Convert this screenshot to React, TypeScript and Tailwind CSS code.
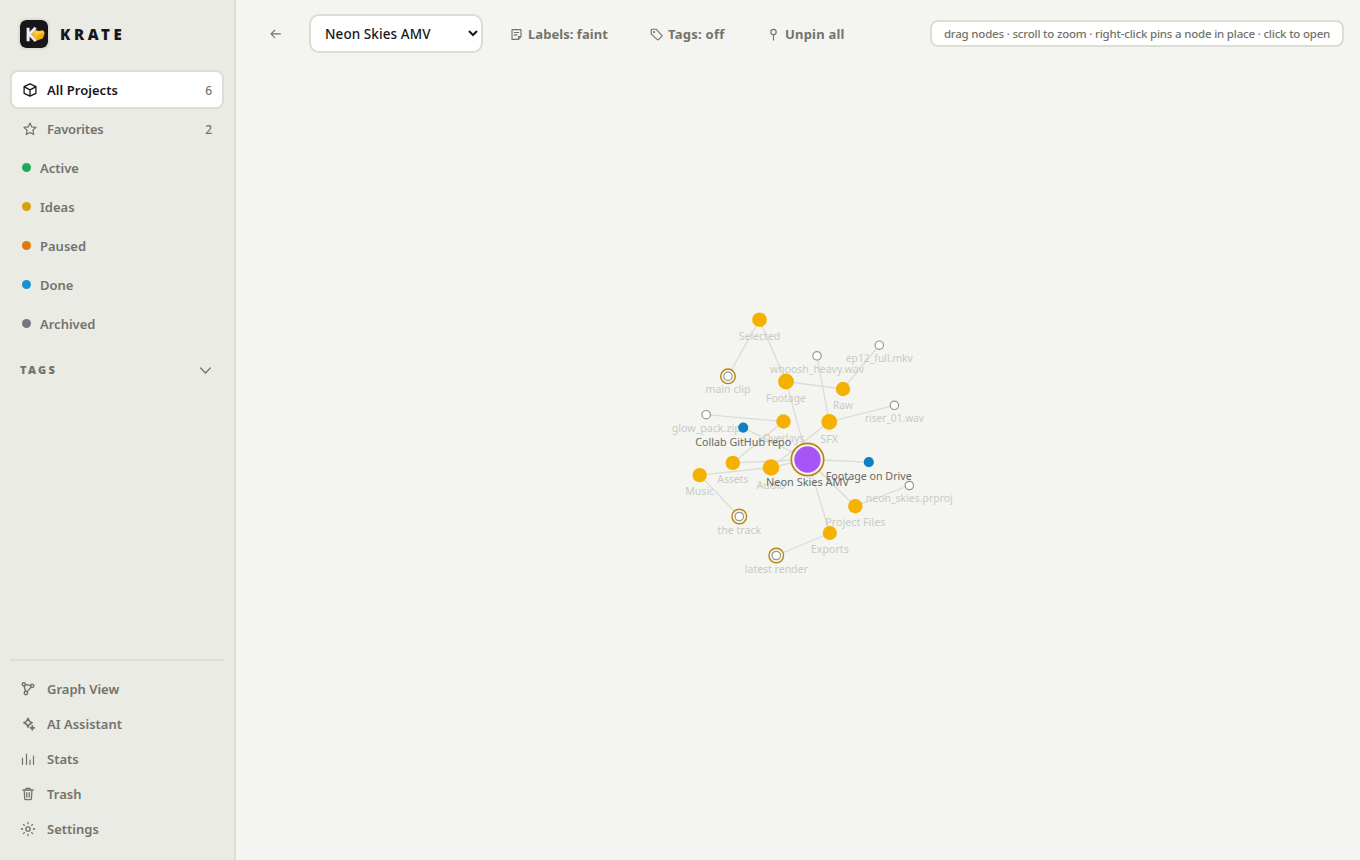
import React from "react";

type IconProps = { children: React.ReactNode; size?: number; sw?: number };

function Icon({ children, size = 16, sw = 1.2 }: IconProps) {
  return (
    <svg width={size} height={size} viewBox="0 0 16 16" fill="none" stroke="currentColor" strokeWidth={sw} strokeLinecap="round" strokeLinejoin="round" className="block shrink-0">
      {children}
    </svg>
  );
}

const statuses = [
  { name: "Active", dot: "bg-[#22a958]" },
  { name: "Ideas", dot: "bg-[#d6a10c]" },
  { name: "Paused", dot: "bg-[#e07a0c]" },
  { name: "Done", dot: "bg-[#1a90cf]" },
  { name: "Archived", dot: "bg-[#777680]" },
];

const tools = [
  {
    name: "Graph View",
    icon: (
      <Icon sw={1.4}>
        <circle cx="3.8" cy="3.3" r="1.6" />
        <circle cx="12.3" cy="4.7" r="1.6" />
        <circle cx="5.9" cy="12" r="1.7" />
        <path d="M5.5 3.7l5.1.7M4.2 5l1.3 5.200M11.200 6l-4 4.600" />
      </Icon>
    ),
  },
  {
    name: "AI Assistant",
    icon: (
      <Icon sw={1.5}>
        <path d="M8 2.2C8.5 5 9.5 6 12.2 6.7 9.5 7.4 8.5 8.5 8 11.2 7.5 8.5 6.5 7.4 3.8 6.7 6.5 6 7.5 5 8 2.2z" />
        <path d="M12.3 9.800v4M10.300 11.800h4" strokeWidth="1.8" />
      </Icon>
    ),
  },
  {
    name: "Stats",
    icon: (
      <Icon>
        <path d="M2.5 7v6.500M6.500 3v10.500M10 9v4.500M13.500 5v8.500" />
      </Icon>
    ),
  },
  {
    name: "Trash",
    icon: (
      <Icon sw={1.3}>
        <path d="M3 4h10.200M6 3.800V2.300h4v1.500M4.200 4.200l.5 8.500q.1 1 1.100 1h4.500q1 0 1.100-1l.5-8.500M6.800 6.700V11M9.300 6.700V11" />
      </Icon>
    ),
  },
  {
    name: "Settings",
    icon: (
      <Icon sw={1.3}>
        <circle cx="8" cy="8" r="2.200" />
        <path d="M8 1.500v1.200M8 13.300v1.200M1.300 8h1.400M13.300 8h1.400M3.400 3.400l1 1M11.600 11.600l1 1M3.400 12.600l1-1M11.600 4.400l1-1" />
      </Icon>
    ),
  },
];

function Logo() {
  return (
    <svg width="28" height="28" viewBox="0 0 28 28" className="block shrink-0 rounded-[6px] bg-[#17171b] outline-2 outline-[#dddfd3]">
      <path d="M8.1 7.800v13.400M15.600 7.800L9.400 14.300l6.400 6.700" fill="none" stroke="#eeeef6" strokeWidth="3" />
      <path d="M11.600 14.300l3.600-4 3.600.6 4.400-.4 1.500 2.700-1.700 5-6.600 2.600z" fill="#f5a90c" />
      <path d="M13.400 12.600l2-2 3.400.5 4.200-.4.900 1.600-6.600 2.600z" fill="#ffd13b" />
      <path d="M11.600 14.300l1.700-1.800 4 2.400-.9 5.700z" fill="#fbbb22" />
    </svg>
  );
}

type Node = { x: number; y: number; r: number; kind: "folder" | "file" | "link" | "root"; pin?: boolean; label: string; ly: number; w: number };

const nodes: Record<string, Node> = {
  selected: { x: 759.5, y: 319.7, r: 7.3, kind: "folder", label: "Selected", ly: 339.5, w: 41.5 },
  main: { x: 728, y: 376.3, r: 4.2, kind: "file", pin: true, label: "main clip", ly: 392.8, w: 45 },
  footage: { x: 786, y: 381.5, r: 7.9, kind: "folder", label: "Footage", ly: 401.8, w: 40 },
  whoosh: { x: 817, y: 355.8, r: 4.2, kind: "file", label: "whoosh_heavy.wav", ly: 372.8, w: 94 },
  ep: { x: 879.3, y: 345.2, r: 4.2, kind: "file", label: "ep12_full.mkv", ly: 361.7, w: 67 },
  raw: { x: 843, y: 389, r: 7.2, kind: "folder", label: "Raw", ly: 408.8, w: 20 },
  riser: { x: 894.4, y: 405.3, r: 4.2, kind: "file", label: "riser_01.wav", ly: 421.9, w: 59 },
  sfx: { x: 829.2, y: 421.8, r: 7.9, kind: "folder", label: "SFX", ly: 442.7, w: 18 },
  overlays: { x: 783.5, y: 421.5, r: 7.2, kind: "folder", label: "Overlays", ly: 441.7, w: 42 },
  glow: { x: 706.2, y: 414.7, r: 4.2, kind: "file", label: "glow_pack.zip", ly: 431.7, w: 69 },
  assets: { x: 732.8, y: 462.9, r: 7.2, kind: "folder", label: "Assets", ly: 482.7, w: 31 },
  music: { x: 699.7, y: 475.1, r: 7.2, kind: "folder", label: "Music", ly: 494.8, w: 29 },
  audio: { x: 771, y: 467.5, r: 8.3, kind: "folder", label: "Audio", ly: 488.5, w: 29 },
  track: { x: 739.3, y: 516.5, r: 4.2, kind: "file", pin: true, label: "the track", ly: 533.8, w: 44 },
  render: { x: 776.3, y: 555.5, r: 4.2, kind: "file", pin: true, label: "latest render", ly: 572.7, w: 63 },
  exports: { x: 829.8, y: 533, r: 7.1, kind: "folder", label: "Exports", ly: 552.7, w: 38 },
  project: { x: 855.3, y: 506.2, r: 7.2, kind: "folder", label: "Project Files", ly: 525.8, w: 60 },
  prproj: { x: 909.3, y: 485.5, r: 4.2, kind: "file", label: "neon_skies.prproj", ly: 501.8, w: 87 },
  collab: { x: 743.2, y: 427.6, r: 5.1, kind: "link", label: "Collab GitHub repo", ly: 445.7, w: 96 },
  drive: { x: 868.8, y: 462.1, r: 5.1, kind: "link", label: "Footage on Drive", ly: 479.7, w: 86 },
  root: { x: 807.5, y: 459.5, r: 13.2, kind: "root", pin: true, label: "Neon Skies AMV", ly: 486, w: 83 },
};

const edges: [string, string][] = [
  ["root", "footage"], ["root", "audio"], ["root", "assets"], ["root", "project"], ["root", "exports"],
  ["root", "collab"], ["root", "drive"], ["footage", "selected"], ["footage", "raw"], ["selected", "main"],
  ["raw", "ep"], ["audio", "sfx"], ["audio", "music"], ["sfx", "whoosh"], ["sfx", "riser"],
  ["assets", "overlays"], ["overlays", "glow"], ["music", "track"], ["exports", "render"], ["project", "prproj"],
];

const fills = { folder: "#f5b100", file: "#ffffff", link: "#0f80c3", root: "#a855f7" };

function Graph() {
  return (
    <svg viewBox="236 68 1124 792" className="block h-[792px] w-[1124px]">
      {edges.map(([a, b]) => (
        <line key={a + b} x1={nodes[a].x} y1={nodes[a].y} x2={nodes[b].x} y2={nodes[b].y} stroke="#dbdcd7" strokeWidth="1.3" />
      ))}
      {Object.entries(nodes).map(([key, n]) => (
        <g key={key}>
          {n.pin && <circle cx={n.x} cy={n.y} r={n.kind === "root" ? 16.2 : 7.3} fill="#f4f5f0" stroke="#b8860b" strokeWidth={n.kind === "root" ? 1.7 : 1.4} />}
          <circle cx={n.x} cy={n.y} r={n.r} fill={fills[n.kind]} stroke={n.kind === "file" ? "#96968f" : "none"} strokeWidth="1.2" />
          <text
            x={n.x - n.w / 2}
            y={n.ly}
            textLength={n.w}
            lengthAdjust="spacingAndGlyphs"
            fill={n.kind === "link" || n.kind === "root" ? "#696964" : "#c9cac5"}
            className="font-['Noto_Sans',sans-serif] text-[10.5px] font-normal"
          >
            {n.label}
          </text>
        </g>
      ))}
    </svg>
  );
}

export default function App() {
  return (
    <div className="flex h-[860px] w-[1360px] overflow-hidden bg-[#f4f5f0] font-['Noto_Sans','Open_Sans',sans-serif] text-[13px] font-semibold text-[#73736c]">
      <aside className="flex w-[236px] shrink-0 flex-col border-r-2 border-[#dcddd3] bg-[#eaebe4] px-[10px]">
        <div className="flex h-[70px] items-center gap-3 pb-[2px] pl-[10px]">
          <Logo />
          <span className="text-[15px] font-black tracking-[3.6px] text-[#17171b]">KRATE</span>
        </div>
        <nav className="flex flex-col">
          <div className="flex h-[39px] items-center gap-[9px] rounded-[8px] border-2 border-[#dcddd3] bg-white px-[10px] text-[#17171b]">
            <Icon sw={1.3}>
              <path d="M8 1.800l5.900 2.900v6.600L8 14.200l-5.900-2.900V4.700zM2.300 4.800L8 7.800l5.700-3M8 7.800v6.200" />
            </Icon>
            <span className="grow pt-[2px] tracking-[0.05px]">All Projects</span>
            <span className="pt-[2px] text-[12px] font-medium text-[#73736c]">6</span>
          </div>
          <div className="flex h-[39px] items-center gap-[9px] px-3">
            <Icon>
              <path d="M8 2l1.800 3.900 4.200.5-3.100 2.900.8 4.300L8 11.500l-3.700 2.100.8-4.300L2 6.400l4.200-.5z" />
            </Icon>
            <span className="grow pt-[2px] tracking-[-0.2px]">Favorites</span>
            <span className="pt-[2px] text-[12px] font-medium">2</span>
          </div>
          {statuses.map((s) => (
            <div key={s.name} className="flex h-[39px] items-center gap-[9px] px-3">
              <span className={"mb-px size-[9px] rounded-full " + s.dot} />
              <span className="pt-[2px] tracking-[0px]">{s.name}</span>
            </div>
          ))}
        </nav>
        <div className="mt-[17px] flex h-[20px] items-center justify-between pr-[12px] pl-[10px]">
          <span className="text-[11px] font-black tracking-[2.3px]">TAGS</span>
          <Icon size={13} sw={1.6}>
            <path d="M2 5l6 6 6-6" />
          </Icon>
        </div>
        <div className="mt-auto mb-[14px] flex flex-col border-t-2 border-[#dcddd3] pt-[10px]">
          {tools.map((t) => (
            <div key={t.name} className="flex h-[35px] items-center gap-[11px] px-[10px]">
              {t.icon}
              <span className="pt-[2px] tracking-[0px]">{t.name}</span>
            </div>
          ))}
        </div>
      </aside>
      <main className="flex grow flex-col">
        <header className="flex h-[68px] items-center pr-4 pb-px pl-[33px]">
          <Icon size={13} sw={1.4}>
            <path d="M14 8.500H2.500M7 4L2.500 8.500 7 13" />
          </Icon>
          <select className="ml-[27px] h-[39px] w-[174px] rounded-[10px] border-2 border-[#dcddd3] bg-white px-[10px] text-[13.5px] font-medium tracking-[0.08px] text-[#17171b]">
            <option>Neon Skies AMV</option>
          </select>
          <div className="ml-[27px] flex items-center gap-[5px] pt-px font-bold">
            <Icon size={13} sw={1.4}>
              <path d="M2.500 2H13.500v8.500L10.500 14h-8zM13.500 10.500h-3V14M5.200 5.500h5.500M5.200 8.500h3.500" />
            </Icon>
            <span className="w-[80px] pt-px whitespace-nowrap tracking-[0.05px]">Labels: faint</span>
          </div>
          <div className="ml-[42px] flex items-center gap-[5px] pt-px font-bold">
            <Icon size={13} sw={1.4}>
              <path d="M1.500 3q0-1.500 1.500-1.500h4.500l7 7.500q.6.700 0 1.400l-4 4q-.7.700-1.400 0L1.500 7.500z" />
              <circle cx="5" cy="5" r=".7" />
            </Icon>
            <span className="w-[57px] pt-px whitespace-nowrap tracking-[0.25px]">Tags: off</span>
          </div>
          <div className="ml-[42px] flex items-center gap-[5px] pt-px font-bold">
            <Icon size={13} sw={1.4}>
              <circle cx="8" cy="5" r="3.300" />
              <path d="M8 8.300v6.500" />
            </Icon>
            <span className="w-[60px] pt-px whitespace-nowrap tracking-[0.2px]">Unpin all</span>
          </div>
          <div className="ml-auto flex h-[27px] w-[414px] items-center justify-center rounded-[8px] border-2 border-[#dcddd3] bg-white text-[11.5px] font-medium whitespace-nowrap tracking-[-0.2px]">
            drag nodes · scroll to zoom · right-click pins a node in place · click to open
          </div>
        </header>
        <Graph />
      </main>
    </div>
  );
}
